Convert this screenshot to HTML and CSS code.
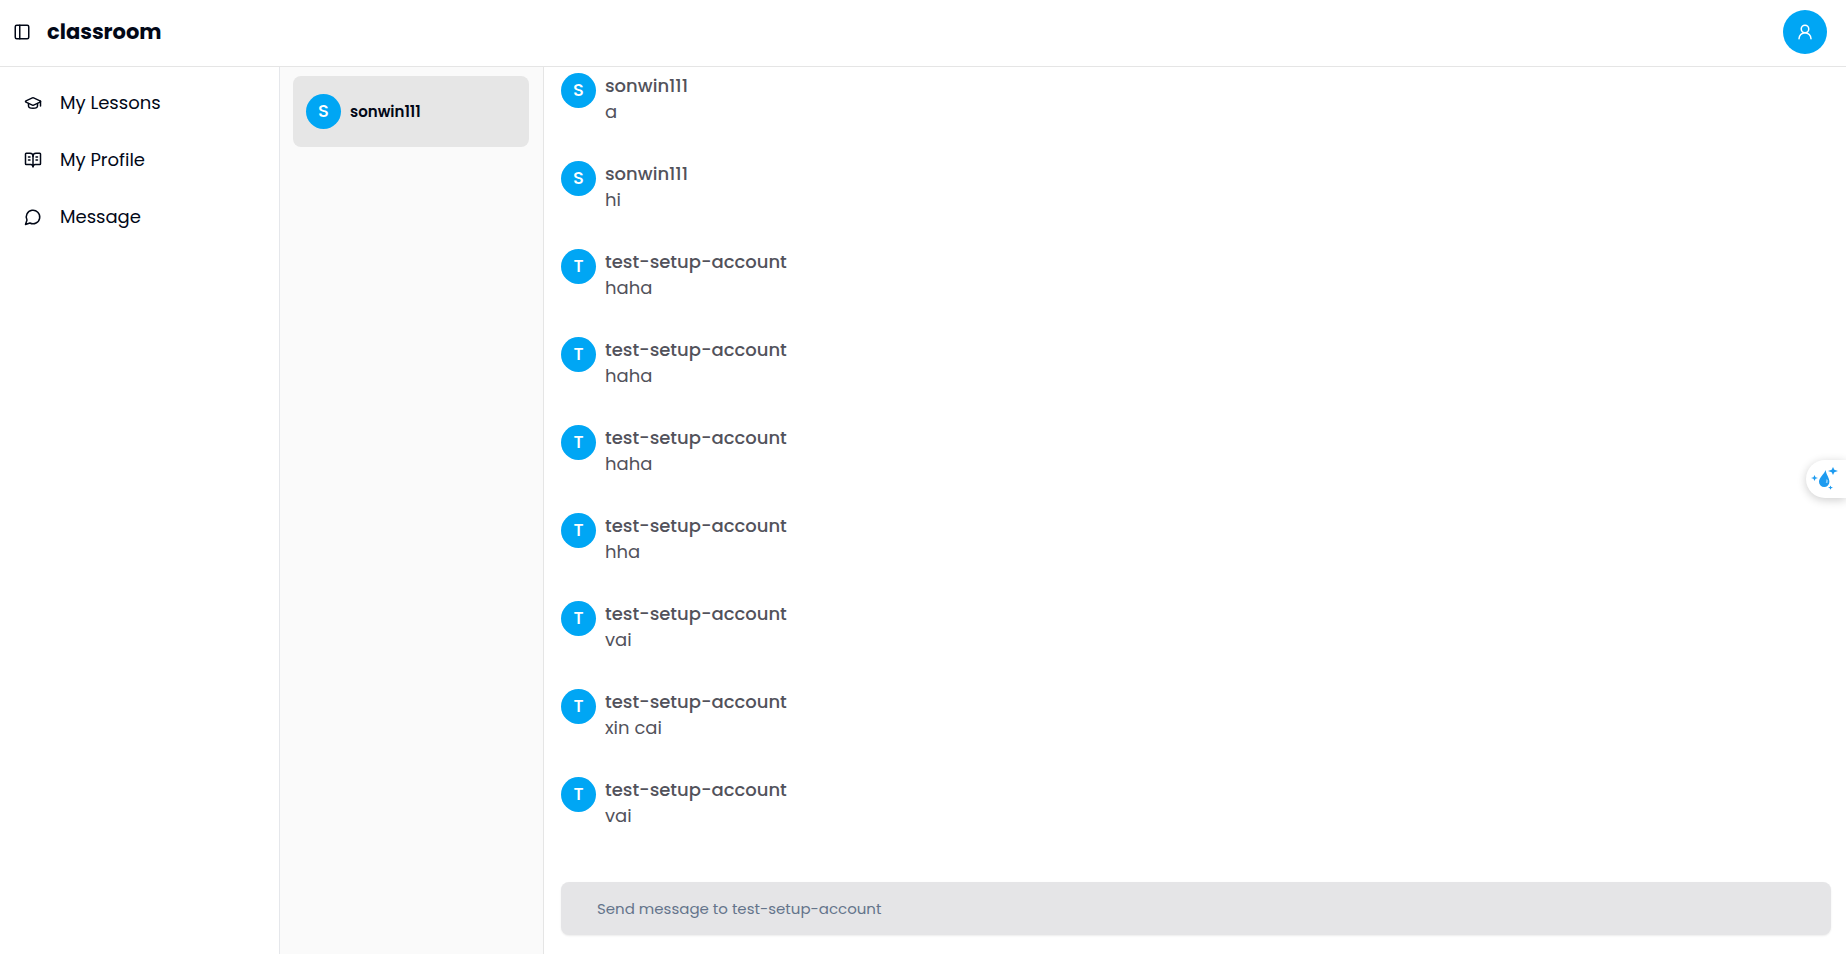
FILE: index.html
```html
<!DOCTYPE html>
<html lang="en">
<head>
<meta charset="utf-8">
<title>classroom</title>
<link rel="stylesheet" href="styles.css">
</head>
<body>
<header class="topbar">
  <button class="toggle" type="button" aria-label="Toggle sidebar">
    <svg class="icon" viewBox="0 0 24 24"><rect x="3" y="3" width="18" height="18" rx="2"/><path d="M9 3v18"/></svg>
  </button>
  <a class="brand" href="#">classroom</a>
  <button class="account" type="button" aria-label="Account">
    <svg class="icon" viewBox="0 0 24 24"><circle cx="12" cy="8" r="5"/><path d="M20 21a8 8 0 0 0-16 0"/></svg>
  </button>
</header>
<div class="layout">
  <nav class="sidebar">
    <a class="nav-link" href="#"><svg class="icon" viewBox="0 0 24 24"><path d="M21.42 10.922a1 1 0 0 0-.019-1.838L12.83 5.18a2 2 0 0 0-1.66 0L2.6 9.08a1 1 0 0 0 0 1.832l8.57 3.908a2 2 0 0 0 1.66 0z"/><path d="M22 10v6"/><path d="M6 12.500V16a6 3 0 0 0 12 0v-3.500"/></svg><span>My Lessons</span></a>
    <a class="nav-link" href="#"><svg class="icon" viewBox="0 0 24 24"><path d="M12 7v14"/><path d="M16 12h2"/><path d="M16 8h2"/><path d="M3 18a1 1 0 0 1-1-1V4a1 1 0 0 1 1-1h5a4 4 0 0 1 4 4 4 4 0 0 1 4-4h5a1 1 0 0 1 1 1v13a1 1 0 0 1-1 1h-6a3 3 0 0 0-3 3 3 3 0 0 0-3-3z"/><path d="M6 12h2"/><path d="M6 8h2"/></svg><span>My Profile</span></a>
    <a class="nav-link" href="#"><svg class="icon" viewBox="0 0 24 24"><path d="M7.900 20A9 9 0 1 0 4 16.100L2 22Z"/></svg><span>Message</span></a>
  </nav>
  <aside class="contacts">
    <a class="contact" href="#"><span class="avatar">S</span><span class="contact-name">sonwin111</span></a>
  </aside>
  <main class="chat">
    <ul class="messages">
      <li class="message"><span class="avatar">S</span><div><p class="author">sonwin111</p><p class="text">a</p></div></li>
      <li class="message"><span class="avatar">S</span><div><p class="author">sonwin111</p><p class="text">hi</p></div></li>
      <li class="message"><span class="avatar">T</span><div><p class="author">test-setup-account</p><p class="text">haha</p></div></li>
      <li class="message"><span class="avatar">T</span><div><p class="author">test-setup-account</p><p class="text">haha</p></div></li>
      <li class="message"><span class="avatar">T</span><div><p class="author">test-setup-account</p><p class="text">haha</p></div></li>
      <li class="message"><span class="avatar">T</span><div><p class="author">test-setup-account</p><p class="text">hha</p></div></li>
      <li class="message"><span class="avatar">T</span><div><p class="author">test-setup-account</p><p class="text">vai</p></div></li>
      <li class="message"><span class="avatar">T</span><div><p class="author">test-setup-account</p><p class="text">xin cai</p></div></li>
      <li class="message"><span class="avatar">T</span><div><p class="author">test-setup-account</p><p class="text">vai</p></div></li>
    </ul>
    <form class="composer">
      <input class="composer-input" type="text" aria-label="Message" placeholder="Send message to test-setup-account">
    </form>
  </main>
</div>
<button class="widget" type="button" aria-label="Assistant">
  <svg class="widget-icon" viewBox="0 0 28 24"><path d="M14.500 3C13.500 7 8 10.500 8 14.700a5.200 5.200 0 0 0 10.400 0C18.400 11 15.500 8 14.500 3z"/><path d="M22 0l1.300 2.700L27 4l-3.700 1.300L22 8l-1.300-2.700L17 4l3.700-1.300zM3.500 8l1 2.200 2.500.8-2.500.8-1 2.200-1-2.200L0 11l2.500-.8zM19.500 18.500l.7 1.500 1.800.6-1.800.6-.7 1.500-.7-1.500-1.800-.6 1.800-.6z"/><path class="glint" d="M15.500 12l1.400 1.300-.5 3-1.600-.6z"/></svg>
</button>
</body>
</html>
```
FILE: styles.css
```css
* { box-sizing: border-box; }
body {
  margin: 0;
  height: 100vh;
  display: flex;
  flex-direction: column;
  overflow: hidden;
  background: #fff;
  color: #020817;
  font-family: Poppins, Inter, sans-serif;
  font-size: 18px;
  line-height: 26px;
}
a { color: inherit; text-decoration: none; }
button { border: 0; padding: 0; background: none; color: inherit; font: inherit; cursor: pointer; }
.icon {
  flex: none;
  display: block;
  width: 18px;
  height: 18px;
  fill: none;
  stroke: currentColor;
  stroke-width: 2;
  stroke-linecap: round;
  stroke-linejoin: round;
}
.topbar {
  flex: none;
  display: flex;
  align-items: center;
  height: 67px;
  padding: 0 19px 2px 13px;
  border-bottom: 1px solid #e5e5e5;
}
.brand { margin-left: 16px; font-size: 21px; font-weight: 700; }
.account {
  display: grid;
  place-items: center;
  width: 44px;
  height: 44px;
  margin-left: auto;
  border-radius: 50%;
  background: #00a6f4;
  color: #fff;
}
.layout { flex: 1; min-height: 0; display: flex; }
.sidebar { flex: none; width: 280px; padding-top: 7px; border-right: 1px solid #e5e7eb; }
.nav-link { display: flex; align-items: center; gap: 18px; height: 57px; padding-left: 24px; }
.contacts { flex: none; width: 264px; padding: 9px 14px 9px 13px; border-right: 1px solid #e5e5e5; background: #fafafa; }
.contact {
  display: flex;
  align-items: center;
  gap: 9px;
  height: 71px;
  padding: 0 13px;
  border-radius: 8px;
  background: #e6e6e6;
}
.contact-name { font-size: 15px; font-weight: 600; }
.avatar {
  flex: none;
  width: 35px;
  height: 35px;
  border-radius: 50%;
  background: #00a6f4;
  color: #fff;
  font-weight: 500;
  line-height: 34px;
  text-align: center;
}
.chat { flex: 1; min-width: 0; display: flex; flex-direction: column; padding: 0 15px 19px 17px; }
.messages {
  flex: 1;
  min-height: 0;
  display: flex;
  flex-direction: column;
  justify-content: flex-end;
  margin: 0;
  padding: 0 0 35px;
  overflow: hidden;
  list-style: none;
  color: #52525b;
}
.message { flex: none; display: flex; gap: 9px; padding: 18px 0; }
.author, .text { margin: 0; }
.author { font-weight: 500; }
.composer { flex: none; display: flex; }
.composer-input {
  flex: 1;
  min-width: 0;
  height: 53px;
  padding: 0 36px;
  border: 0;
  border-radius: 8px;
  background: #e5e5e7;
  box-shadow: 0 1px 2px rgba(0, 0, 0, 0.08);
  color: inherit;
  font: inherit;
  font-size: 15px;
}
.composer-input::placeholder { color: #64748b; opacity: 1; }
.widget {
  position: fixed;
  top: 460px;
  right: 0;
  width: 40px;
  height: 38px;
  padding-left: 5px;
  border-radius: 19px 0 0 19px;
  background: #fff;
  box-shadow: 0 2px 10px rgba(0, 0, 0, 0.2);
}
.widget-icon { display: block; width: 28px; height: 24px; fill: #1d9bf0; }
.glint { fill: #8fd0fa; }
```
